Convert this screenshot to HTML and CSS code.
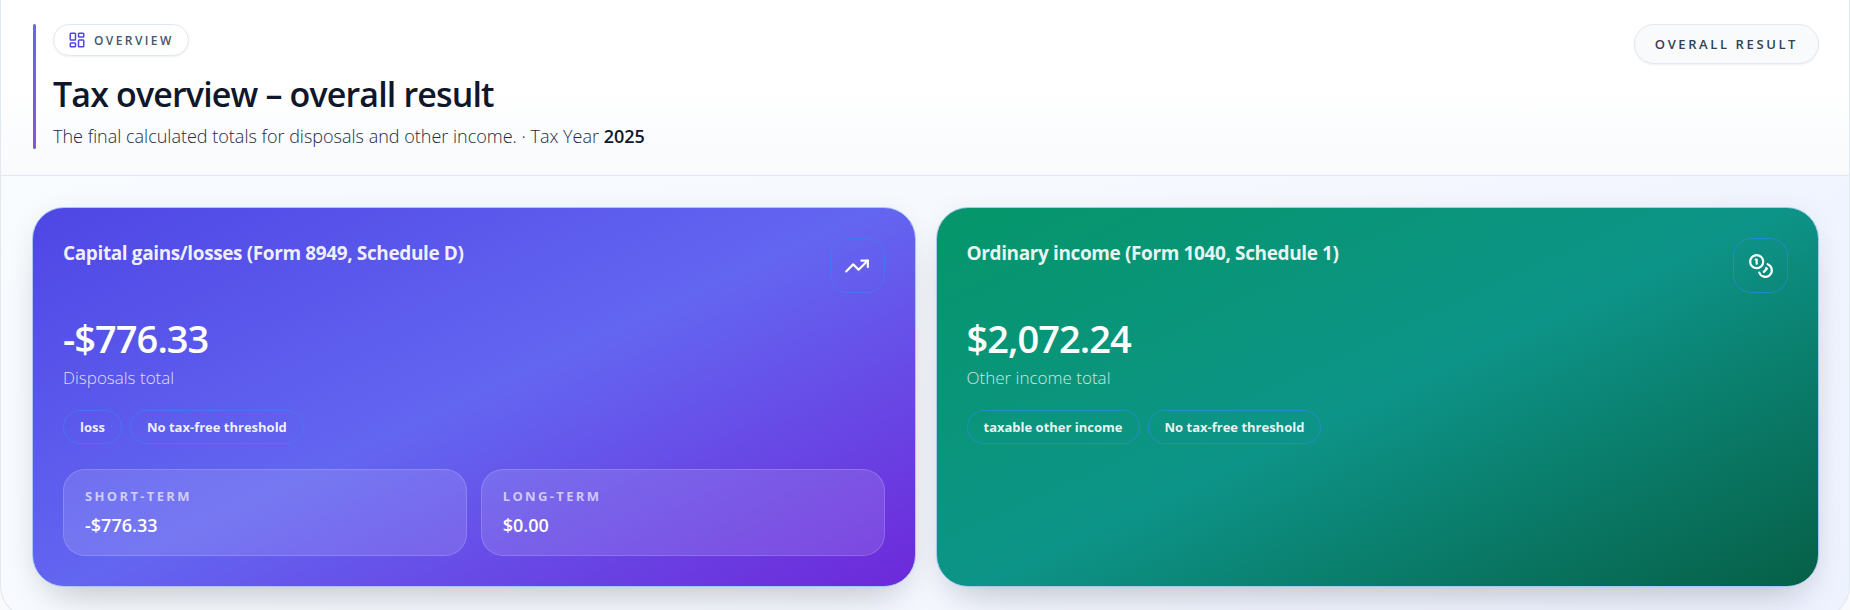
FILE: index.html
```html
<!DOCTYPE html>
<html lang="en">
<head>
    <meta charset="UTF-8">
    <meta name="viewport" content="width=device-width, initial-scale=1.0">
    <title>Tax overview</title>
    <link rel="stylesheet" href="styles.css">
</head>
<body>

    <main class="panel">
        <header class="panel-header">
            <div class="intro">
                <span class="badge">
                    <svg class="badge-icon" viewBox="0 0 24 24" aria-hidden="true">
                        <rect x="3" y="3" width="7" height="9" rx="1"/>
                        <rect x="14" y="3" width="7" height="5" rx="1"/>
                        <rect x="14" y="12" width="7" height="9" rx="1"/>
                        <rect x="3" y="16" width="7" height="5" rx="1"/>
                    </svg>
                    Overview
                </span>
                <h1>Tax overview – overall result</h1>
                <p class="subtitle">The final calculated totals for disposals and other income. · Tax Year <strong>2025</strong></p>
            </div>
            <span class="result-tag">Overall result</span>
        </header>

        <section class="cards">
            <article class="card card-gains">
                <div class="card-top">
                    <h2>Capital gains/losses (Form 8949, Schedule D)</h2>
                    <span class="card-icon">
                        <svg viewBox="0 0 24 24" aria-hidden="true">
                            <path d="M16 7h6v6"/>
                            <path d="m22 7-8.5 8.5-5-5L2 17"/>
                        </svg>
                    </span>
                </div>
                <p class="amount">-$776.33</p>
                <p class="amount-label">Disposals total</p>
                <ul class="tags">
                    <li>loss</li>
                    <li>No tax-free threshold</li>
                </ul>
                <dl class="terms">
                    <div class="term">
                        <dt>Short-term</dt>
                        <dd>-$776.33</dd>
                    </div>
                    <div class="term">
                        <dt>Long-term</dt>
                        <dd>$0.00</dd>
                    </div>
                </dl>
            </article>

            <article class="card card-income">
                <div class="card-top">
                    <h2>Ordinary income (Form 1040, Schedule 1)</h2>
                    <span class="card-icon">
                        <svg viewBox="0 0 24 24" aria-hidden="true">
                            <circle cx="8" cy="8" r="6"/>
                            <path d="M18.09 10.37A6 6 0 1 1 10.34 18"/>
                            <path d="M7 6h1v4"/>
                            <path d="m16.71 13.88.7.71-2.82 2.82"/>
                        </svg>
                    </span>
                </div>
                <p class="amount">$2,072.24</p>
                <p class="amount-label">Other income total</p>
                <ul class="tags">
                    <li>taxable other income</li>
                    <li>No tax-free threshold</li>
                </ul>
            </article>
        </section>
    </main>

</body>
</html>
```

FILE: styles.css
```css
* {
    margin: 0;
    padding: 0;
    box-sizing: border-box;
}

body {
    height: 100vh;
    overflow: hidden;
    background: #f8fafc;
    font-family: "Segoe UI", "Open Sans", "Noto Sans", sans-serif;
    color: #0f172a;
}

svg {
    fill: none;
    stroke: currentColor;
    stroke-width: 2;
    stroke-linecap: round;
    stroke-linejoin: round;
}

.panel {
    border: 1px solid #e2e8f0;
    border-top: none;
    border-radius: 0 0 32px 32px;
    overflow: hidden;
    background: linear-gradient(135deg, #f8fcff 0%, #f6f9fe 50%, #eef2ff 100%);
}

/* Header */
.panel-header {
    display: flex;
    justify-content: space-between;
    align-items: flex-start;
    padding: 24px 30px 26px 32px;
    border-bottom: 1px solid #e2e8f0;
    background: linear-gradient(#fff 50%, #f8fafc);
}

.intro {
    position: relative;
    padding-left: 20px;
}

.intro::before {
    content: "";
    position: absolute;
    left: 0;
    top: 0;
    bottom: 0;
    width: 3px;
    border-radius: 2px;
    background: linear-gradient(#6366f1, #8456d8);
}

.badge,
.result-tag {
    display: inline-flex;
    align-items: center;
    border: 1px solid #e2e8f0;
    border-radius: 999px;
    box-shadow: 0 1px 2px rgba(15, 23, 42, 0.06);
    text-transform: uppercase;
}

.badge {
    gap: 8px;
    height: 32px;
    padding: 0 14px;
    background: #fff;
    color: #475569;
    font-size: 12px;
    font-weight: 600;
    letter-spacing: 0.2em;
}

.badge-icon {
    width: 18px;
    height: 18px;
    color: #4f46e5;
}

.result-tag {
    height: 40px;
    padding: 0 20px;
    background: #f8fafc;
    color: #334155;
    font-size: 13px;
    font-weight: 600;
    letter-spacing: 0.2em;
}

h1 {
    margin-top: 16px;
    font-size: 34px;
    font-weight: 600;
    line-height: 44px;
    letter-spacing: -0.025em;
}

.subtitle {
    margin-top: 8px;
    color: #1e293b;
    font-size: 18px;
    font-weight: 300;
    line-height: 25px;
}

.subtitle strong {
    color: #0f172a;
    font-weight: 600;
}

/* Cards */
.cards {
    display: grid;
    grid-template-columns: 1fr 1fr;
    gap: 20px;
    padding: 31px 30px 30px 31px;
}

.card {
    padding: 30px;
    border: 1px solid #a9c8f5;
    border-radius: 32px;
    background-origin: border-box;
    box-shadow: 0 24px 40px -20px rgba(15, 23, 42, 0.22), 0 4px 28px rgba(15, 23, 42, 0.06);
    color: #fff;
}

.card-gains {
    background-image: linear-gradient(155deg, #4f46e5 0%, #6366f1 50%, #6d28d9 100%);
}

.card-income {
    background-image: linear-gradient(155deg, #059669 0%, #0d9488 50%, #065f46 100%);
}

.card-top {
    display: flex;
    justify-content: space-between;
    align-items: flex-start;
}

.card h2 {
    font-size: 19px;
    font-weight: 700;
    line-height: 30px;
    letter-spacing: -0.02em;
    color: rgba(255, 255, 255, 0.92);
}

.card-icon {
    display: grid;
    place-items: center;
    width: 55px;
    height: 55px;
    border: 1px solid rgba(59, 130, 246, 0.6);
    border-radius: 18px;
}

.card-icon svg {
    width: 26px;
    height: 26px;
}

.amount {
    margin-top: 23px;
    font-size: 38px;
    font-weight: 600;
    line-height: 44px;
    letter-spacing: -0.025em;
}

.amount-label {
    margin-top: 5px;
    color: rgba(255, 255, 255, 0.8);
    font-size: 17px;
    font-weight: 300;
    line-height: 26px;
}

.tags {
    display: flex;
    gap: 8px;
    margin-top: 19px;
    list-style: none;
}

.tags li {
    padding: 0 16px;
    border: 1px solid rgba(59, 130, 246, 0.6);
    border-radius: 999px;
    font-size: 13px;
    font-weight: 700;
    line-height: 32px;
    color: rgba(255, 255, 255, 0.92);
}

.terms {
    display: grid;
    grid-template-columns: 1fr 1fr;
    gap: 14px;
    margin-top: 25px;
}

.term {
    padding: 16px 21px 17px;
    border: 1px solid rgba(255, 255, 255, 0.16);
    border-radius: 22px;
    background: rgba(255, 255, 255, 0.12);
}

.term dt {
    color: rgba(255, 255, 255, 0.66);
    font-size: 13px;
    font-weight: 700;
    line-height: 20px;
    letter-spacing: 0.18em;
    text-transform: uppercase;
}

.term dd {
    margin-top: 6px;
    font-size: 18px;
    font-weight: 600;
    line-height: 26px;
}
```
